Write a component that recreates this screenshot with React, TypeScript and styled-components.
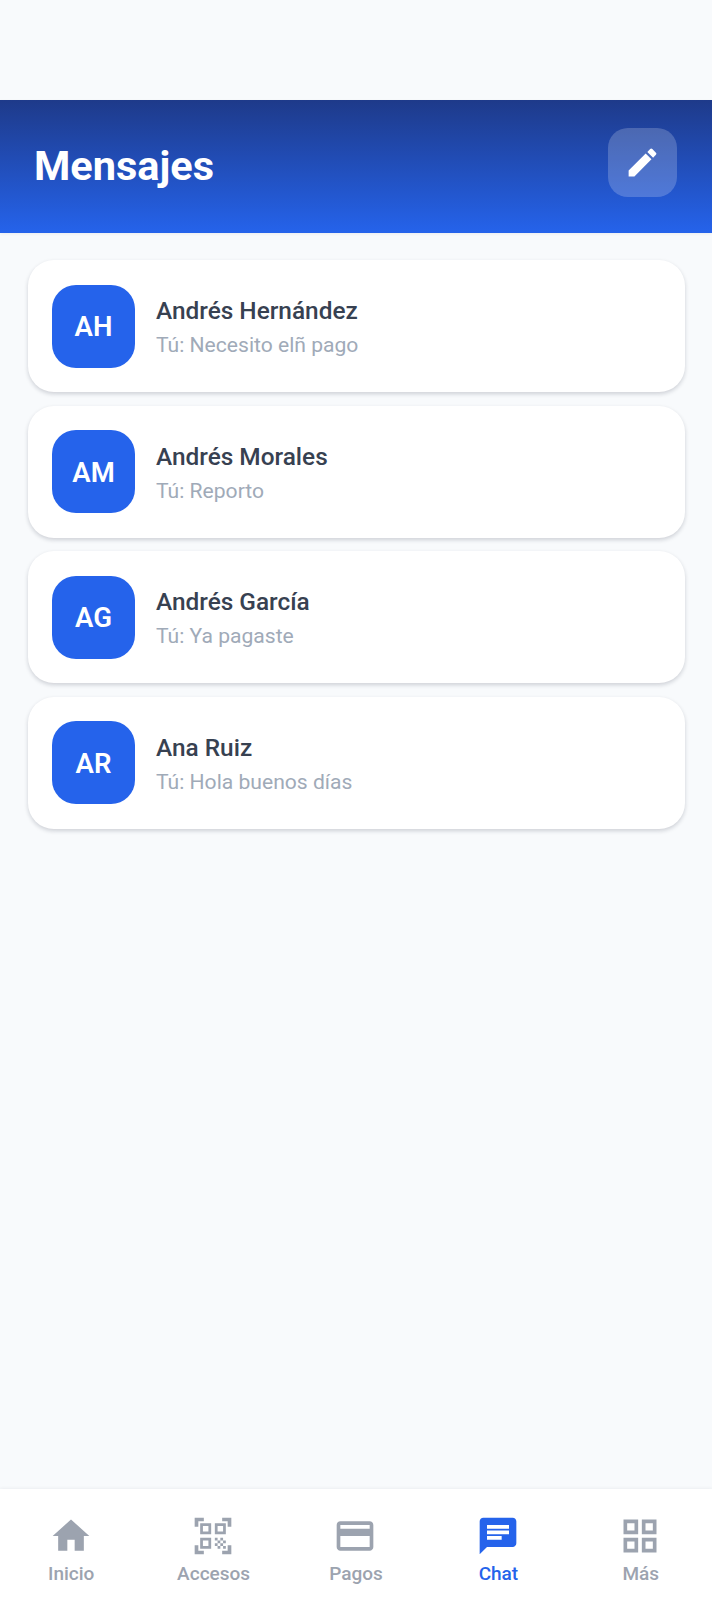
import React from "react";
import styled, { createGlobalStyle } from "styled-components";
import { MdHome, MdEdit, MdCreditCard, MdChat, MdGridView, MdQrCodeScanner } from "react-icons/md";

const Global = createGlobalStyle`
  html, body { margin: 0; padding: 0; background: #f8fafc; }
  * { box-sizing: border-box; }
`;

const Page = styled.div`
  width: 712px;
  height: 1600px;
  display: flex;
  flex-direction: column;
  background: #f8fafc;
  font-family: Roboto, "Liberation Sans", sans-serif;
`;

const Header = styled.header`
  margin-top: 100px;
  height: 133px;
  padding: 28px 35px 36px 34px;
  display: flex;
  align-items: center;
  justify-content: space-between;
  background: linear-gradient(180deg, #1e3a8a 0%, #2563eb 100%);
  box-shadow: 0 1px 3px rgba(15, 23, 42, 0.06);
`;

const Title = styled.h1`
  margin: 6px 0 0;
  color: #fff;
  font-size: 41.5px;
  font-weight: 700;
  line-height: 48px;
`;

const EditButton = styled.button`
  width: 69px;
  height: 69px;
  border: 0;
  padding: 0;
  border-radius: 20px;
  background: rgba(255, 255, 255, 0.2);
  color: #fff;
  display: flex;
  align-items: center;
  justify-content: center;
`;

const List = styled.main`
  flex: 1;
  padding: 27px 27px 0 27.5px;
  display: flex;
  flex-direction: column;
  gap: 13.6px;
`;

const Card = styled.article`
  height: 132px;
  padding: 0 24.5px;
  display: flex;
  align-items: center;
  gap: 21px;
  background: #fff;
  border-radius: 26px;
  box-shadow: 0 2px 4px rgba(15, 23, 42, 0.18);
`;

const Avatar = styled.div`
  width: 83px;
  height: 83px;
  flex: none;
  padding-top: 1px;
  border-radius: 24px;
  background: #2563eb;
  color: #fff;
  display: flex;
  align-items: center;
  justify-content: center;
  font-size: 27.5px;
  font-weight: 600;
`;

const Info = styled.div`
  display: flex;
  flex-direction: column;
  gap: 7px;
  padding-top: 3px;
`;

const Name = styled.div`
  color: #374151;
  font-size: 24.4px;
  font-weight: 500;
  line-height: 28px;
`;

const Preview = styled.div`
  color: #a0aab8;
  font-size: 21.1px;
  line-height: 26px;
`;

const Nav = styled.nav`
  height: 111px;
  background: #fff;
  display: grid;
  grid-template-columns: repeat(5, 1fr);
  box-shadow: 0 -1px 3px rgba(15, 23, 42, 0.05);
`;

const NavItem = styled.div<{ $active?: boolean }>`
  display: flex;
  flex-direction: column;
  align-items: center;
  padding-top: 25px;
  color: ${(p) => (p.$active ? "#2563eb" : "#9ca3af")};
  font-size: 19px;
  font-weight: 500;

  svg {
    margin-right: 1px;
  }
`;

const NavLabel = styled.span`
  margin-top: 4px;
  line-height: 24px;
`;

const chats = [
  { i: "AH", n: "Andrés Hernández", m: "Tú: Necesito elñ pago" },
  { i: "AM", n: "Andrés Morales", m: "Tú: Reporto" },
  { i: "AG", n: "Andrés García", m: "Tú: Ya pagaste" },
  { i: "AR", n: "Ana Ruiz", m: "Tú: Hola buenos días" },
];

const nav = [
  { l: "Inicio", I: MdHome },
  { l: "Accesos", I: MdQrCodeScanner },
  { l: "Pagos", I: MdCreditCard },
  { l: "Chat", I: MdChat, a: true },
  { l: "Más", I: MdGridView },
];

export default function App() {
  return (
    <Page>
      <Global />
      <Header>
        <Title>Mensajes</Title>
        <EditButton aria-label="Nuevo mensaje">
          <MdEdit size={37} />
        </EditButton>
      </Header>
      <List>
        {chats.map((c) => (
          <Card key={c.i}>
            <Avatar>{c.i}</Avatar>
            <Info>
              <Name>{c.n}</Name>
              <Preview>{c.m}</Preview>
            </Info>
          </Card>
        ))}
      </List>
      <Nav>
        {nav.map(({ l, I, a }) => (
          <NavItem key={l} $active={a}>
            <I size={44} />
            <NavLabel>{l}</NavLabel>
          </NavItem>
        ))}
      </Nav>
    </Page>
  );
}
